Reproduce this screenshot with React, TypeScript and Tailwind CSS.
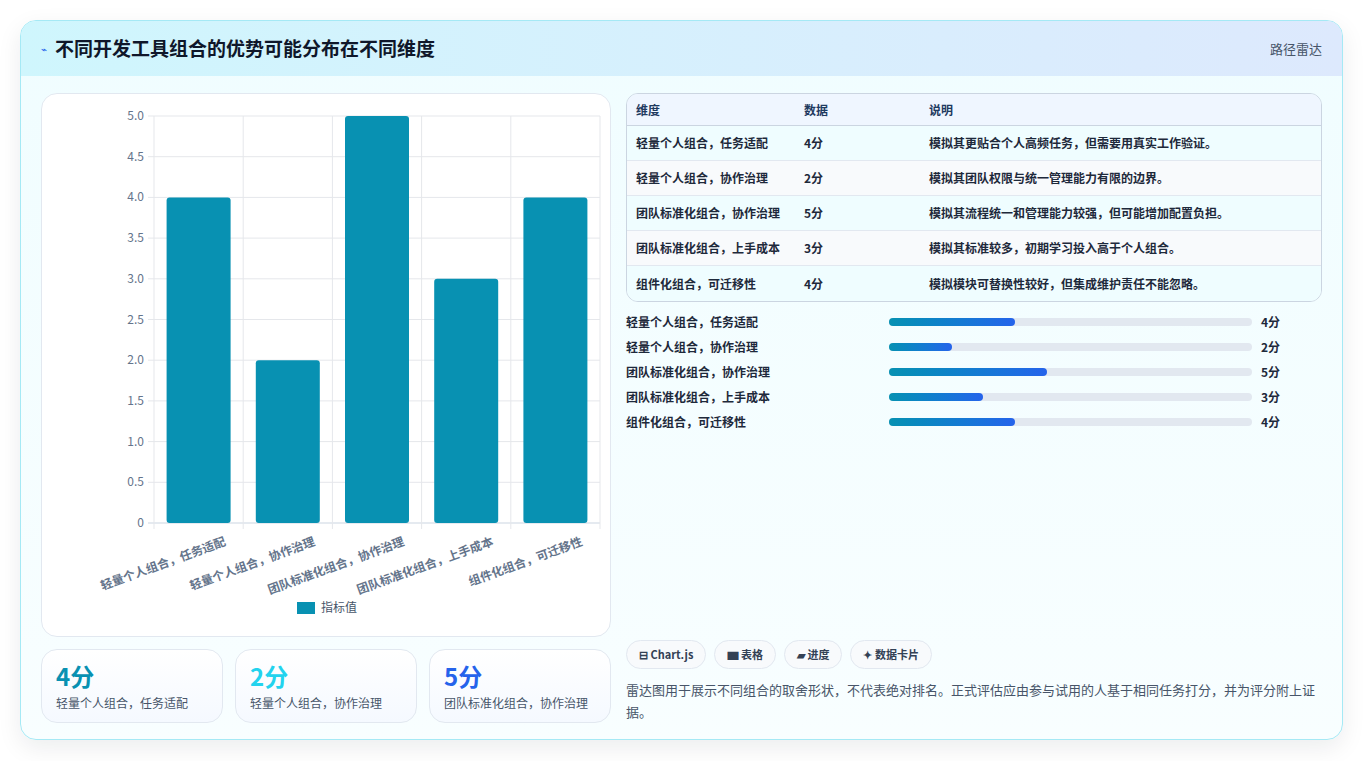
const rows = [
  { name: "轻量个人组合，任务适配", score: 4, note: "模拟其更贴合个人高频任务，但需要用真实工作验证。" },
  { name: "轻量个人组合，协作治理", score: 2, note: "模拟其团队权限与统一管理能力有限的边界。" },
  { name: "团队标准化组合，协作治理", score: 5, note: "模拟其流程统一和管理能力较强，但可能增加配置负担。" },
  { name: "团队标准化组合，上手成本", score: 3, note: "模拟其标准较多，初期学习投入高于个人组合。" },
  { name: "组件化组合，可迁移性", score: 4, note: "模拟模块可替换性较好，但集成维护责任不能忽略。" },
];

const font = { fontFamily: '"Noto Sans CJK SC", "Noto Sans", sans-serif' };

function BarChart() {
  const L = 112, R = 558, T = 22, B = 429;
  const step = (R - L) / 5;
  const ticks = [0, 0.5, 1, 1.5, 2, 2.5, 3, 3.5, 4, 4.5, 5];
  return (
    <svg width="570" height="543" style={font}>
      {ticks.map((t) => {
        const y = B - (t / 5) * (B - T);
        return (
          <g key={t}>
            <line x1={L - 6} x2={R} y1={y} y2={y} stroke={t === 0 ? "#cbd5e1" : "#e5e7eb"} />
            <text x={L - 10} y={y + 4} textAnchor="end" fontSize="12" fill="#64748b">
              {t === 0 ? "0" : t.toFixed(1)}
            </text>
          </g>
        );
      })}
      {[0, 1, 2, 3, 4, 5].map((i) => (
        <line key={i} x1={L + i * step} x2={L + i * step} y1={T} y2={B + 6} stroke="#e5e7eb" />
      ))}
      {rows.map((r, i) => {
        const cx = L + step * (i + 0.5);
        const h = (r.score / 5) * (B - T);
        return (
          <g key={r.name}>
            <rect x={cx - 32} y={B - h} width="64" height={h} rx="3" fill="#0891b2" />
            <text
              x={cx + 28}
              y={B + 22}
              textAnchor="end"
              fontSize="12"
              fontWeight="600"
              fill="#64748b"
              transform={`rotate(-20 ${cx + 28} ${B + 22})`}
            >
              {r.name}
            </text>
          </g>
        );
      })}
      <rect x="255" y="508" width="18" height="12" fill="#0891b2" />
      <text x="279" y="518" fontSize="12" fill="#475569">指标值</text>
    </svg>
  );
}

export default function App() {
  const stats = [
    { v: "4分", c: "text-[#0891b2]", l: "轻量个人组合，任务适配" },
    { v: "2分", c: "text-[#22d3ee]", l: "轻量个人组合，协作治理" },
    { v: "5分", c: "text-[#2563eb]", l: "团队标准化组合，协作治理" },
  ];
  const pct = [34.7, 17.4, 43.4, 26, 34.7];
  return (
    <div className="min-h-screen bg-white p-5" style={font}>
      <div className="h-[720px] overflow-hidden rounded-2xl border border-[#a5e9f5] bg-gradient-to-b from-[#f0fdff] to-[#f8feff] shadow-[0_8px_24px_rgba(15,23,42,0.08)]">
        <div className="flex h-[55px] items-center justify-between bg-gradient-to-r from-[#cff6fd] to-[#dde9fd] px-5">
          <div className="flex items-center gap-2">
            <span className="text-[10px] text-[#2563eb]">⌁</span>
            <span className="text-[19px] font-bold text-[#0f172a]">不同开发工具组合的优势可能分布在不同维度</span>
          </div>
          <span className="text-[13px] text-[#475569]">路径雷达</span>
        </div>
        <div className="flex gap-[15px] px-5 pt-[17px]">
          <div className="flex w-[570px] flex-col gap-3">
            <div className="h-[544px] rounded-2xl border border-[#e2e8f0] bg-white">
              <BarChart />
            </div>
            <div className="grid grid-cols-3 gap-[12px]">
              {stats.map((s) => (
                <div key={s.v} className="h-[74px] rounded-2xl border border-[#e2e8f0] bg-gradient-to-b from-white to-[#f5f9ff] px-[14px] pt-[10px]">
                  <div className={`text-[24px] font-bold leading-8 ${s.c}`}>{s.v}</div>
                  <div className="mt-[2px] text-[12px] text-[#475569]">{s.l}</div>
                </div>
              ))}
            </div>
          </div>
          <div className="flex flex-1 flex-col">
            <div className="overflow-hidden rounded-xl border border-[#cbd5e1] text-[12px] text-[#1e293b]">
              <div className="flex h-[32px] items-center border-b border-[#cbd5e1] bg-[#eff6ff] px-[9px] font-semibold text-[#1e3a5f]">
                <span className="w-[168px]">维度</span>
                <span className="w-[125px]">数据</span>
                <span>说明</span>
              </div>
              {rows.map((r, i) => (
                <div key={r.name} className={`flex h-[35px] items-center px-[9px] font-semibold ${i % 2 === 0 ? "bg-[#effdff]" : "bg-[#f8fafc]"} ${i < 4 ? "border-b border-[#e2e8f0]" : ""}`}>
                  <span className="w-[168px]">{r.name}</span>
                  <span className="w-[125px]">{r.score}分</span>
                  <span>{r.note}</span>
                </div>
              ))}
            </div>
            <div className="mt-[11px] flex flex-col gap-[7px]">
              {rows.map((r, i) => (
                <div key={r.name} className="flex h-[18px] items-center text-[12px] font-semibold text-[#1e293b]">
                  <span className="w-[263px]">{r.name}</span>
                  <div className="h-[8px] w-[363px] rounded-full bg-[#e2e8f0]">
                    <div className="h-full rounded-full bg-gradient-to-r from-[#0891b2] to-[#2563eb]" style={{ width: `${pct[i]}%` }} />
                  </div>
                  <span className="ml-[9px]">{r.score}分</span>
                </div>
              ))}
            </div>
            <div className="mt-[209px] flex gap-[8px]">
              {["⊟ Chart.js", "▆ 表格", "▰ 进度", "✦ 数据卡片"].map((c) => (
                <span key={c} className="rounded-full border border-[#e2e8f0] bg-[#f8fafc] px-[12px] py-[5px] text-[11px] font-semibold text-[#334155]">{c}</span>
              ))}
            </div>
            <p className="mt-[10px] text-[13px] leading-[22px] text-[#475569]">
              雷达图用于展示不同组合的取舍形状，不代表绝对排名。正式评估应由参与试用的人基于相同任务打分，并为评分附上证据。
            </p>
          </div>
        </div>
      </div>
    </div>
  );
}
